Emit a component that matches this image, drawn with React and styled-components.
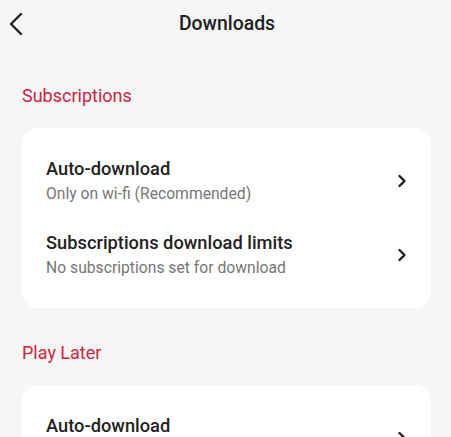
import styled, {createGlobalStyle} from 'styled-components';

const GlobalStyle = createGlobalStyle`
  html, body {
    margin: 0;
    padding: 0;
    background: #f6f6f6;
    font-family: Roboto, 'Liberation Sans', sans-serif;
  }
`;

const Page = styled.div`
  width: 451px;
  height: 437px;
  background: #f6f6f6;
  overflow: hidden;
`;

const Header = styled.header`
  position: relative;
  height: 46px;
  display: flex;
  align-items: center;
  justify-content: center;
`;

const BackButton = styled.button`
  position: absolute;
  left: 4px;
  top: 10px;
  width: 24px;
  height: 28px;
  padding: 0;
  border: none;
  background: none;
  display: flex;
  align-items: center;
  justify-content: center;
`;

const Title = styled.h1`
  margin: 0 0 0 3px;
  font-size: 19.4px;
  font-weight: 500;
  color: #222;
`;

const Section = styled.section`
  padding: 0 20px 0 22px;
`;

const SectionTitle = styled.h2`
  margin: ${({$first}) => ($first ? '38px' : '33px')} 0 20px;
  font-size: 18px;
  font-weight: 400;
  color: #d0243f;
  line-height: 24px;
`;

const Card = styled.div`
  background: #fff;
  border-radius: 16px;
  padding: 29px 0 30px;
  display: flex;
  flex-direction: column;
  gap: 27px;
`;

const Row = styled.div`
  display: flex;
  align-items: center;
  padding: 0 22px 0 24px;
`;

const RowText = styled.div`
  flex: 1;
  display: flex;
  flex-direction: column;
  gap: 3px;
`;

const RowTitle = styled.div`
  font-size: 18.3px;
  font-weight: 500;
  color: #222;
  line-height: 24px;
`;

const RowSub = styled.div`
  font-size: 15.7px;
  color: #777;
  line-height: 20px;
`;

const Chevron = () => (
  <svg width="14" height="14" viewBox="0 0 14 14" fill="none">
    <path
      d="M4.5 2 L9.5 7 L4.5 12"
      stroke="#222"
      strokeWidth="2.4"
      strokeLinecap="round"
      strokeLinejoin="round"
    />
  </svg>
);

const SettingRow = ({title, sub}) => (
  <Row>
    <RowText>
      <RowTitle>{title}</RowTitle>
      {sub && <RowSub>{sub}</RowSub>}
    </RowText>
    <Chevron />
  </Row>
);

const App = () => (
  <Page>
    <GlobalStyle />
    <Header>
      <BackButton aria-label="Back">
        <svg width="16" height="24" viewBox="0 0 16 24" fill="none">
          <path
            d="M13 2 L3 12 L13 22"
            stroke="#222"
            strokeWidth="2.4"
            strokeLinecap="round"
            strokeLinejoin="round"
          />
        </svg>
      </BackButton>
      <Title>Downloads</Title>
    </Header>
    <Section>
      <SectionTitle $first>Subscriptions</SectionTitle>
      <Card>
        <SettingRow title="Auto-download" sub="Only on wi-fi (Recommended)" />
        <SettingRow
          title="Subscriptions download limits"
          sub="No subscriptions set for download"
        />
      </Card>
    </Section>
    <Section>
      <SectionTitle>Play Later</SectionTitle>
      <Card>
        <SettingRow title="Auto-download" sub="Only on wi-fi (Recommended)" />
      </Card>
    </Section>
  </Page>
);

export default App;
